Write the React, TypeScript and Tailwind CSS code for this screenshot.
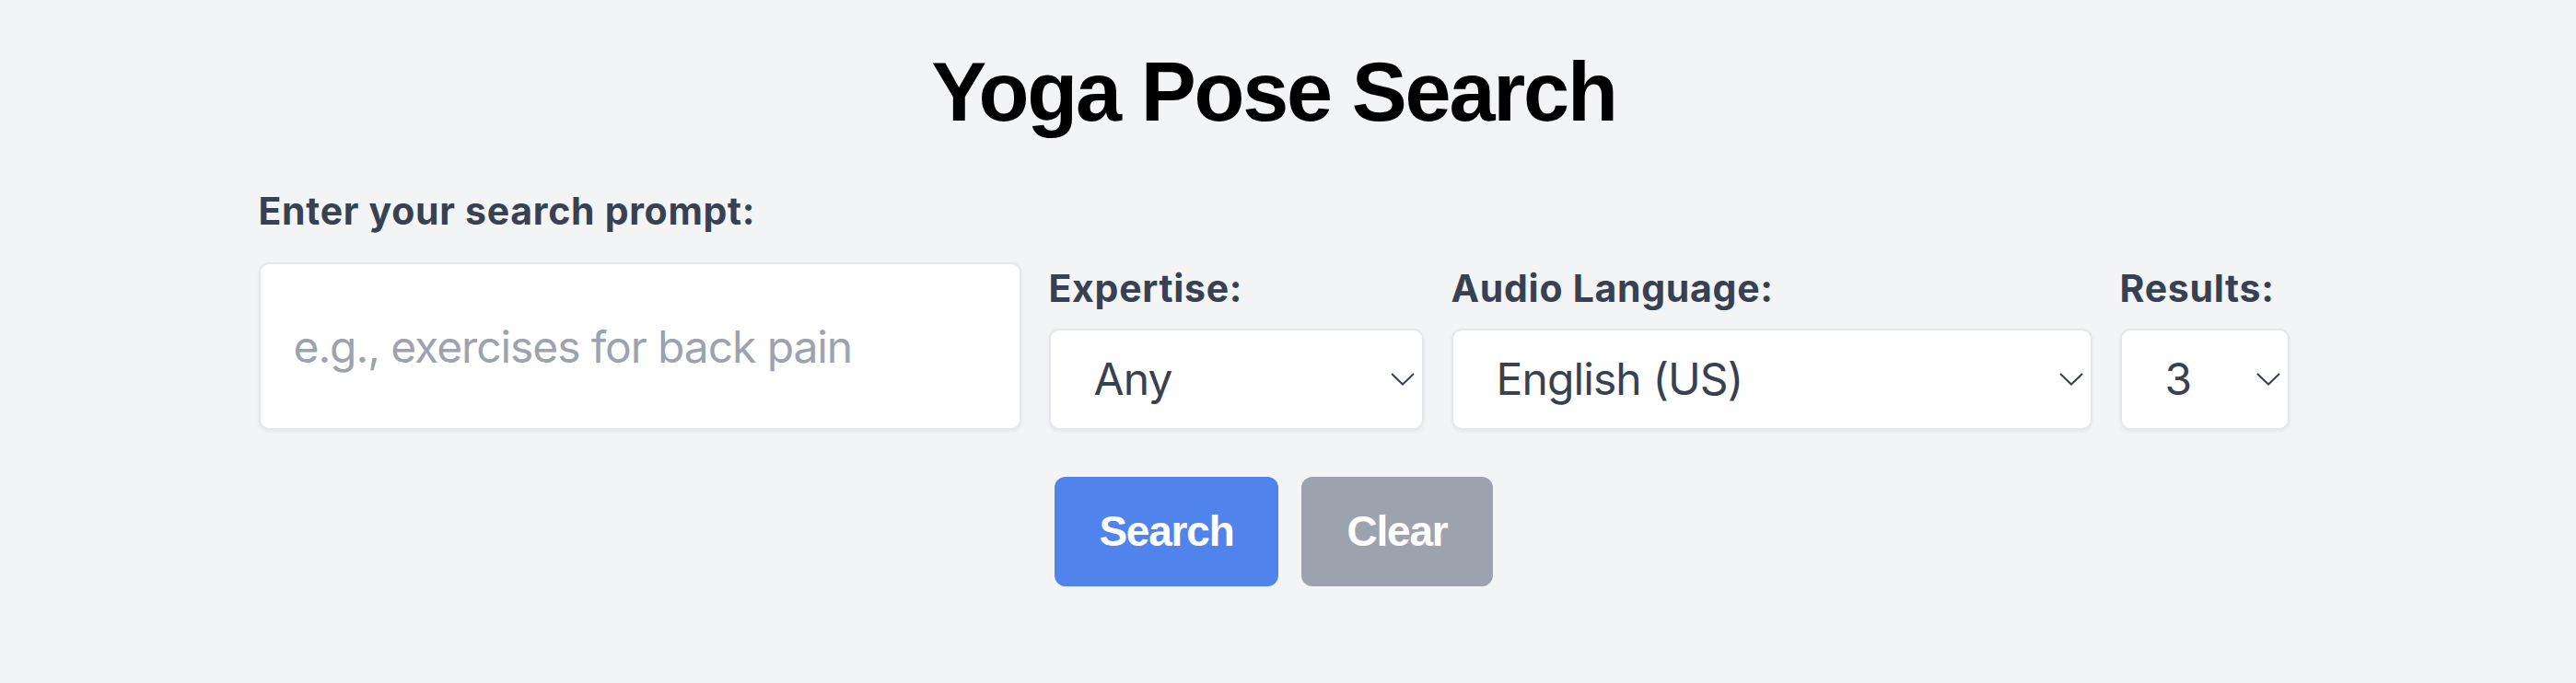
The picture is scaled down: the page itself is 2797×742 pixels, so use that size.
import React from "react";

function Chevron() {
  return (
    <svg
      width="26"
      height="15"
      viewBox="0 0 26 15"
      className="pointer-events-none absolute right-[10px] top-1/2 -translate-y-1/2"
      fill="none"
    >
      <polyline points="1,1.5 13,13 25,1.5" stroke="#374151" strokeWidth="2" strokeLinejoin="miter" />
    </svg>
  );
}

function Select({ value, options }: { value: string; options: string[] }) {
  return (
    <div className="relative w-full">
      <select
        defaultValue={value}
        className="h-[110px] w-full appearance-none rounded-[11px] border-2 border-[#e5e7eb] bg-white pl-[47px] pr-[40px] text-[48px] leading-[58px] tracking-[-0.9px] text-[#374151] shadow-[0_2px_4px_rgba(0,0,0,0.06)] outline-none [font-family:Inter,'Noto_Sans',sans-serif]"
      >
        {options.map((o) => (
          <option key={o}>{o}</option>
        ))}
      </select>
      <Chevron />
    </div>
  );
}

export default function App() {
  const label =
    "block text-[41px] leading-[50px] font-bold text-[#374151] [font-family:Inter,'Noto_Sans',sans-serif] tracking-[0.7px]";
  return (
    <div className="min-h-screen w-full bg-[#f3f4f6] pr-[31px] pt-[50px]">
      <div className="flex flex-col items-center">
        <h1 className="text-[90px] leading-[100px] font-bold tracking-[-2.2px] text-black [font-family:'Liberation_Sans',Arial,sans-serif]">
          Yoga Pose Search
        </h1>
        <div className="mt-[54px] flex w-[2205px] items-end gap-[30px]">
          <div className="w-[828px]">
            <label className={`${label} mb-[31px]`}>Enter your search prompt:</label>
            <input
              type="text"
              placeholder="e.g., exercises for back pain"
              className="h-[182px] w-full rounded-[11px] border-2 border-[#e5e7eb] bg-white px-[36px] text-[48px] tracking-[-1.1px] text-[#374151] shadow-[0_2px_4px_rgba(0,0,0,0.06)] outline-none placeholder:text-[#9ca3af] [font-family:Inter,'Noto_Sans',sans-serif]"
            />
          </div>
          <div className="w-[407px]">
            <label className={`${label} mb-[19px]`}>Expertise:</label>
            <Select value="Any" options={["Any", "Beginner", "Intermediate", "Advanced"]} />
          </div>
          <div className="w-[696px]">
            <label className={`${label} mb-[19px]`}>Audio Language:</label>
            <Select value="English (US)" options={["English (US)", "Spanish", "French"]} />
          </div>
          <div className="w-[184px]">
            <label className={`${label} mb-[19px]`}>Results:</label>
            <Select value="3" options={["1", "2", "3", "4", "5"]} />
          </div>
        </div>
        <div className="mt-[51px] flex gap-[25px]">
          <button className="h-[119px] w-[243px] rounded-[12px] bg-[#5083ec] text-[46px] font-bold tracking-[-1.2px] text-white [font-family:'Liberation_Sans',Arial,sans-serif]">
            Search
          </button>
          <button className="h-[119px] w-[208px] rounded-[12px] bg-[#9ca3af] text-[46px] font-bold tracking-[-1.2px] text-white [font-family:'Liberation_Sans',Arial,sans-serif]">
            Clear
          </button>
        </div>
      </div>
    </div>
  );
}
